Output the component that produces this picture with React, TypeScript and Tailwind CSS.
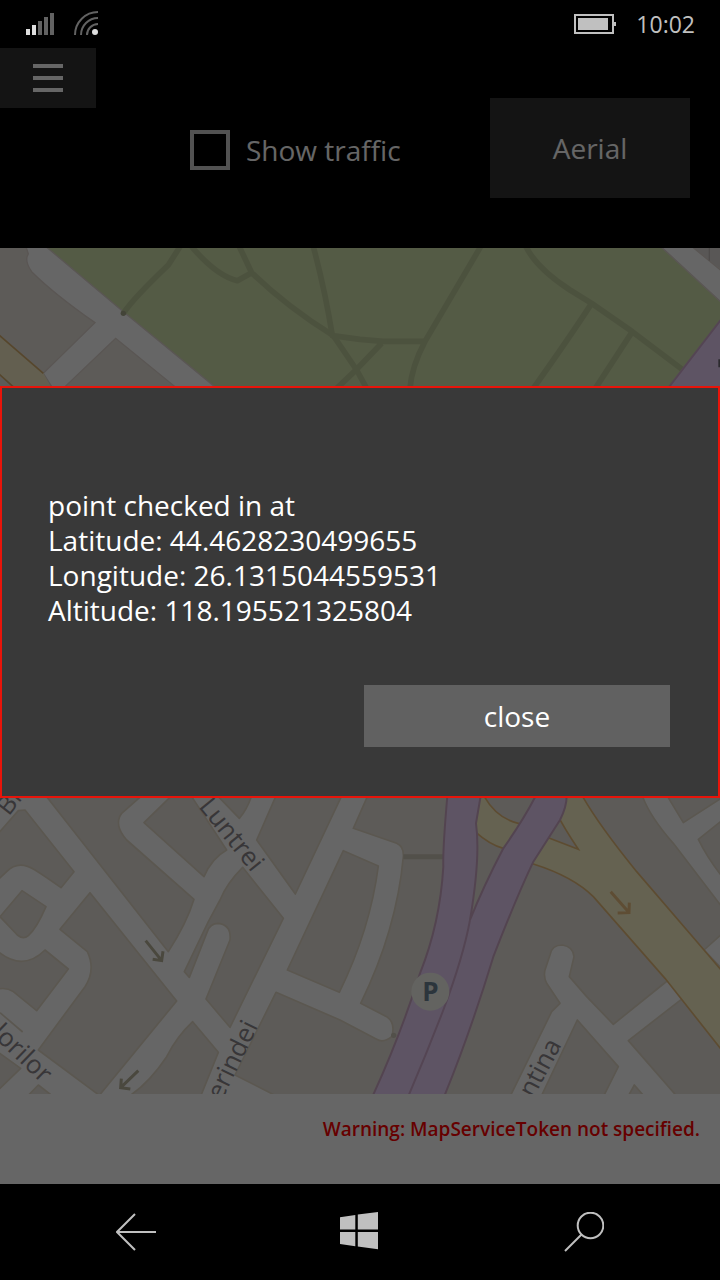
import React, { useState } from 'react';

const FONT = "font-['Open_Sans','Noto_Sans',sans-serif]";

function StatusBar() {
  return (
    <div className="relative z-10 flex h-12 items-center justify-between pl-6 pr-[25px] text-[#c0c0c0]">
      <div className="flex items-center gap-4">
        <svg width="32" height="24" viewBox="0 0 32 24" aria-label="Signal">
          <path fill="#dedede" d="M2 17h4v6H2zM8 13h4v10H8z" />
          <path fill="#626262" d="M14 9h4v14h-4zM20 5h4v18h-4zM26 1h4v22h-4z" />
        </svg>
        <svg width="28" height="26" viewBox="0 0 28 26" aria-label="Wi-Fi">
          <g fill="none" stroke="#626262" strokeWidth="2">
            <path d="M3 24A23 23 0 0 1 26 1" />
            <path d="M9 24A17 17 0 0 1 26 7" />
            <path d="M15 24A11 11 0 0 1 26 13" />
          </g>
          <circle cx="23" cy="21" r="3" fill="#dedede" />
        </svg>
      </div>
      <div className="flex items-center gap-5">
        <svg width="42" height="20" viewBox="0 0 42 20" aria-label="Battery" fill="currentColor">
          <path fillRule="evenodd" d="M0 0h40v20H0zM2 2v16h36V2z" />
          <path d="M4 4h30v12H4zM40 8h2v4h-2z" />
        </svg>
        <span className="text-[23px]">10:02</span>
      </div>
    </div>
  );
}

function MapView() {
  return (
    <svg
      className="block min-h-0 w-full flex-1 basis-0"
      viewBox="0 0 2160 2538"
      preserveAspectRatio="xMidYMid slice"
      aria-label="Map"
    >
      <rect width="2160" height="2538" fill="#e9e3db" />

      {/* park */}
      <g transform="translate(0 -24)">
        <path fill="#d2e3ad" d="M140 24L370 215L640 437V800H2160V185L1985 24Z" />
        <path
          fill="#fff"
          stroke="#e0d6d0"
          strokeWidth="4"
          d="M78 20L85 42Q72 62 95 95Q160 160 285 248L130 400L155 440H195L347 295L525 440H644L370 215L138 20Z"
        />
        <path fill="#f7eec9" d="M-5 283L130 400L155 445H45L-5 400Z" />
        <path d="M-5 283L130 400M-5 400L45 445" stroke="#d8b070" strokeWidth="5" />
        <path fill="#dedad8" d="M2080 24H2160V85Z" />
        <path fill="#fff" stroke="#e0d6d0" strokeWidth="4" d="M1983 20L2164 187V92L2076 20Z" />
        <path d="M2128 24V62" stroke="#c4bcb8" strokeWidth="4" />
        <g fill="none" stroke="#bfcc9c" strokeWidth="17" strokeLinejoin="round">
          <path d="M540 20L505 75Q400 175 370 220" />
          <path d="M575 20Q650 108 712 122L755 98M718 20L755 98Q860 200 1000 287L1070 390L1100 445" />
          <path d="M940 20Q975 150 997 287L1080 298L1150 304H1275M1010 445L1070 388L1145 310" />
          <path d="M1442 20L1275 304Q1235 380 1230 445" />
          <path d="M1578 20Q1610 85 1710 150L1775 190L1897 275L2045 387" />
          <path d="M1775 190Q1710 290 1600 445M1897 275L1786 445" />
        </g>
        <circle cx="370" cy="220" r="8" fill="#a8aa8c" />
        <path fill="#ebd2fa" stroke="#d2acd0" strokeWidth="6" d="M2165 236L2008 440V500H2165Z" />
        <path d="M2158 358V382" stroke="#6e6a74" strokeWidth="6" />
      </g>

      {/* residential blocks */}
      <g transform="translate(0 1626)">
        <rect y="-300" width="1230" height="1212" fill="#fff" />
        <g fill="#e9e3db" stroke="#e3dac8" strokeWidth="5" strokeLinejoin="round">
          <path d="M75 60L222 245L183 293Q140 262 105 240Q55 208 20 245L-5 268V130L55 62Z" />
          <path d="M140 20L505 485Q560 400 582 328L380 150Q340 105 365 70L422 20Z" />
          <path d="M512 20L432 98L612 260Q635 205 680 180L575 20Z" />
          <path d="M655 20L718 85Q740 60 754 20Z" />
          <path d="M827 20L770 150L886 312L1024 20Z" />
          <path d="M728 232L850 385L690 712L618 627L690 450Q695 405 655 400Q630 400 622 425L568 562L553 545L625 395L660 330Q680 280 728 232Z" />
          <path d="M66 302L138 350Q110 415 85 437Q70 450 52 435L0 380Z" />
          <path d="M270 308L180 418L262 485Q288 540 255 590L115 780L298 916L530 633Z" />
          <path d="M-5 485Q70 545 135 480L205 537L110 662L40 605Q20 592 -5 597Z" />
          <path d="M-5 787L62 835L-5 900ZM115 885L85 916H155Z" />
          <path d="M578 695L655 787L603 916H391Q450 875 500 800Q530 740 578 695Z" />
          <path d="M1030 182L862 540L1018 607Q1110 420 1135 228Z" />
          <path d="M1102 20L1060 115L1190 160Q1212 170 1210 200Q1190 420 1082 640L1160 680Q1188 700 1175 740Q1150 760 1130 748L1020 690L828 607L705 855L825 916H2165V20Z" />
        </g>
        <path d="M0 668L68 726" stroke="#e3dac8" strokeWidth="5" />
        <g fill="none" stroke="#b9b39c" strokeWidth="9">
          <path d="M437 452L485 512M458 508L485 512L489 484" />
          <path d="M415 842L362 893M364 866L362 893L391 897" />
        </g>
      </g>

      {/* boulevard and side streets */}
      <g transform="translate(1080 1626)">
        <path d="M130 200H250" stroke="#cdc7b8" strokeWidth="15" />
        <circle cx="101" cy="736" r="8" fill="#cdc7b8" />
        <g fill="#fff" stroke="#e3dac8" strokeWidth="5" strokeLinejoin="round">
          <path d="M848 20Q870 80 940 160L1085 350V258Q1040 200 1015 148L1085 92V24L970 98L923 20Z" />
          <path d="M570 495Q575 465 607 465Q640 470 642 500L628 560L680 620L760 703L925 570L968 625L805 752L948 916H850L823 885L806 916H732L775 830L652 690L545 916H452L575 665L600 640L560 580Q550 560 555 540Z" />
          <path d="M1032 480L1085 432V535Z" />
        </g>
        <path
          fill="#fcf5ca"
          stroke="#e9bd7c"
          strokeWidth="5"
          d="M345 20H373Q410 85 475 100L565 143L655 178Q610 110 590 70L608 20H668Q720 110 830 245L1032 480L1085 542V780L915 565L700 320Q640 260 520 222L430 175Q390 165 345 125Z"
        />
        <path d="M752 305L805 365M773 369L807 368L808 338" fill="none" stroke="#ecc082" strokeWidth="9" />
        <path
          fill="#ebd2fa"
          stroke="#cfaac8"
          strokeWidth="6"
          d="M262 18Q248 180 250 230Q240 400 180 550Q120 740 38 918H253Q330 730 400 500Q470 320 520 215L600 90Q620 50 620 18H527Q490 90 430 175Q370 290 330 390Q362 200 348 100L362 18Z"
        />
        <path d="M330 390Q310 500 250 660Q200 790 146 916" fill="none" stroke="#d2acd0" strokeWidth="6" />
        <circle cx="211" cy="605" r="57" fill="#f7f7f0" />
        <text x="211" y="633" textAnchor="middle" fontSize="78" className="fill-[#6e8496] font-bold">
          P
        </text>
      </g>

      {/* street names */}
      <g fontSize="77" className="fill-[#8c888c] font-medium">
        <text transform="translate(594 1676) rotate(51)">Luntrei</text>
        <text transform="translate(775 2334) rotate(-64)" textAnchor="end">erindei</text>
        <text transform="translate(126 2508) rotate(44)" textAnchor="end">lorilor</text>
        <text transform="translate(26 1706) rotate(-52)">Bi</text>
        <text transform="translate(1686 2390) rotate(-62)" textAnchor="end">ntina</text>
      </g>
    </svg>
  );
}

interface CheckInDialogProps {
  onClose: () => void;
}

function CheckInDialog({ onClose }: CheckInDialogProps) {
  return (
    <div className="absolute inset-0 flex items-center bg-black/60">
      <div
        role="dialog"
        aria-label="Check in"
        className="flex w-full flex-col border-2 border-[#e8140a] bg-[#393939] pb-[49px] pl-[46px] pr-12 pt-[100px] text-white"
      >
        <p className="text-[28px] leading-[35px]">
          point checked in at
          <br />
          Latitude: 44.4628230499655
          <br />
          Longitude: 26.1315044559531
          <br />
          Altitude: 118.195521325804
        </p>
        <button
          type="button"
          onClick={onClose}
          className="mt-[57px] h-[62px] w-[306px] self-end bg-[#616161] text-[28px] leading-[35px]"
        >
          close
        </button>
      </div>
    </div>
  );
}

function NavBar() {
  return (
    <nav className="flex h-24 items-center justify-between bg-black px-[116px]">
      <button type="button" aria-label="Back">
        <svg width="40" height="40" viewBox="0 0 40 40" fill="none" stroke="#c0c0c0" strokeWidth="2">
          <path d="M1 20H40M19 2L1 20L19 38" />
        </svg>
      </button>
      <button type="button" aria-label="Start">
        <svg width="40" height="40" viewBox="0 0 40 40" fill="#c0c0c0">
          <path d="M0 5.2L15.3 3V17.5H0zM17.8 2.6L38 0V17.5H17.8zM0 20H15.3V34.3L0 32zM17.8 20H38V37.3L17.8 34.6z" />
        </svg>
      </button>
      <button type="button" aria-label="Search">
        <svg width="40" height="40" viewBox="0 0 40 40" fill="none" stroke="#c0c0c0" strokeWidth="2">
          <circle cx="26.5" cy="13.5" r="12.8" />
          <path d="M17.5 22.5L1 39" />
        </svg>
      </button>
    </nav>
  );
}

export default function App() {
  const [showTraffic, setShowTraffic] = useState(false);
  const [dialogOpen, setDialogOpen] = useState(true);

  return (
    <div className={`flex min-h-screen flex-col bg-black ${FONT}`}>
      <div className="relative flex flex-1 flex-col">
        <StatusBar />

        <header className="flex text-[28px] leading-[35px] text-white">
          <button
            type="button"
            aria-label="Menu"
            className="flex h-[60px] w-24 flex-col items-center justify-center gap-2 bg-[#333]"
          >
            <span className="h-1 w-[30px] bg-white" />
            <span className="h-1 w-[30px] bg-white" />
            <span className="h-1 w-[30px] bg-white" />
          </button>
          <label className="ml-[94px] flex items-center gap-4 pt-1">
            <input
              type="checkbox"
              checked={showTraffic}
              onChange={(e) => setShowTraffic(e.target.checked)}
              className="size-10 appearance-none border-4 border-[#ccc] checked:bg-[#ccc]"
            />
            Show traffic
          </label>
          <button type="button" className="my-[50px] ml-auto mr-[30px] h-[100px] w-[200px] bg-[#333]">
            Aerial
          </button>
        </header>

        <MapView />

        <p className="bg-white pb-[41px] pr-5 pt-[21px] text-right text-[19px] font-semibold leading-7 text-[#ff0000]">
          Warning: MapServiceToken not specified.
        </p>

        {dialogOpen && <CheckInDialog onClose={() => setDialogOpen(false)} />}
      </div>
      <NavBar />
    </div>
  );
}
